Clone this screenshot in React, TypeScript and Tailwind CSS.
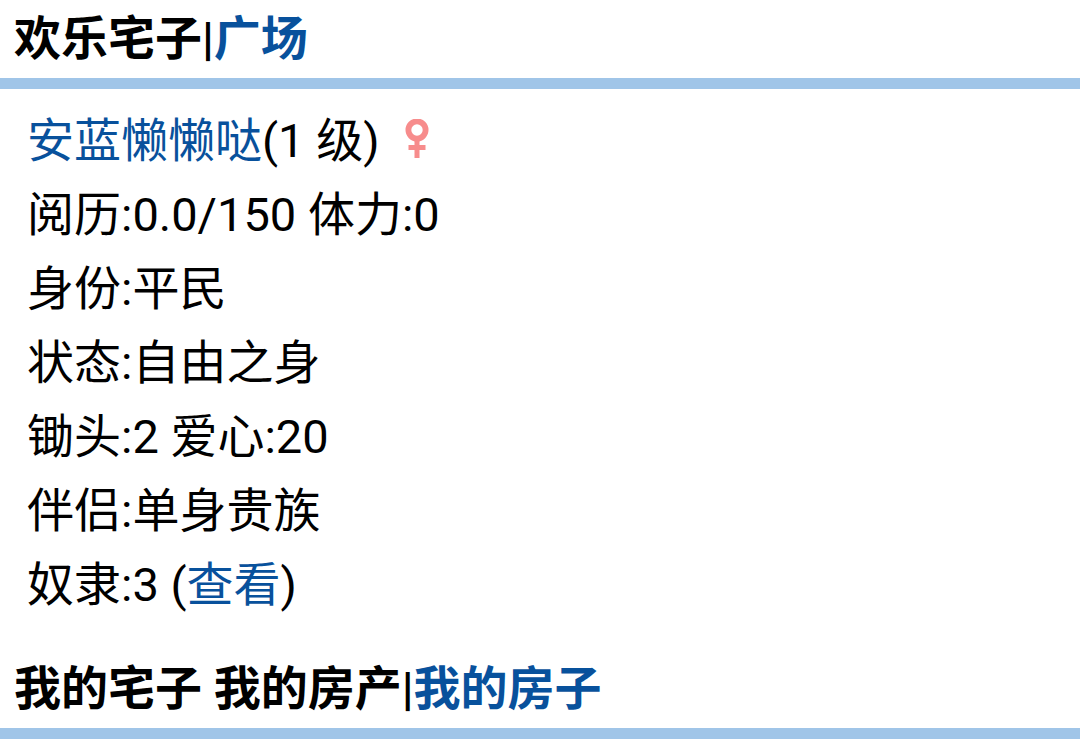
import type { ReactNode } from "react";

const stats = [
  "阅历:0.0/150 体力:0",
  "身份:平民",
  "状态:自由之身",
  "锄头:2 爱心:20",
  "伴侣:单身贵族",
];

export default function App() {
  return (
    <main className="overflow-hidden bg-white font-[Roboto,'Noto_Sans_CJK_SC',sans-serif] text-[47px] text-black">
      <SectionTitle>
        欢乐宅子|<TextLink>广场</TextLink>
      </SectionTitle>

      <section className="px-[27px] pt-[15px] pb-7 leading-[74px]">
        <div className="flex items-center">
          <p>
            <TextLink>安蓝懒懒哒</TextLink>(1 级)
          </p>
          <FemaleIcon className="ml-6 h-11 w-7" />
        </div>
        {stats.map((line) => (
          <p key={line}>{line}</p>
        ))}
        <p>
          奴隶:3 (<TextLink>查看</TextLink>)
        </p>
      </section>

      <SectionTitle>
        我的宅子 我的房产|<TextLink>我的房子</TextLink>
      </SectionTitle>
    </main>
  );
}

function SectionTitle({ children }: { children: ReactNode }) {
  return (
    <h2 className="border-b-[11px] border-[#a0c5e8] px-[14px] font-bold leading-[78px]">
      {children}
    </h2>
  );
}

function TextLink({ children }: { children: ReactNode }) {
  return (
    <a href="#" className="text-[#08519c]">
      {children}
    </a>
  );
}

function FemaleIcon({ className }: { className?: string }) {
  return (
    <svg viewBox="0 0 28 44" fill="none" stroke="#f78c8c" className={className} role="img" aria-label="女">
      <circle cx="13" cy="11" r="8.6" strokeWidth="5.8" />
      <path d="M13 20v19M4.5 28.5h17" strokeWidth="5" />
    </svg>
  );
}
